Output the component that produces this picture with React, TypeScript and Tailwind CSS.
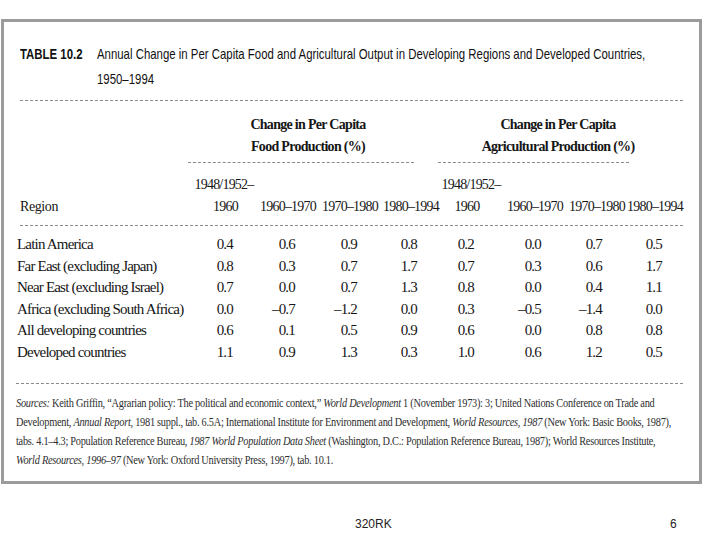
const rows = [
  { region: 'Latin America', values: ['0.4', '0.6', '0.9', '0.8', '0.2', '0.0', '0.7', '0.5'] },
  { region: 'Far East (excluding Japan)', values: ['0.8', '0.3', '0.7', '1.7', '0.7', '0.3', '0.6', '1.7'] },
  { region: 'Near East (excluding Israel)', values: ['0.7', '0.0', '0.7', '1.3', '0.8', '0.0', '0.4', '1.1'] },
  { region: 'Africa (excluding South Africa)', values: ['0.0', '–0.7', '–1.2', '0.0', '0.3', '–0.5', '–1.4', '0.0'] },
  { region: 'All developing countries', values: ['0.6', '0.1', '0.5', '0.9', '0.6', '0.0', '0.8', '0.8'] },
  { region: 'Developed countries', values: ['1.1', '0.9', '1.3', '0.3', '1.0', '0.6', '1.2', '0.5'] },
]

// right padding per value column so the decimals line up like the scan
const valuePad = ['pr-[25px]', 'pr-[23px]', 'pr-[25px]', 'pr-[23px]', 'pr-[28px]', 'pr-[27px]', 'pr-[24px]', 'pr-[22px]']

const cols = 'grid grid-cols-[173px_68px_60px_64px_58px_62px_66px_58px_58px]'
const serif = "font-['Liberation_Serif',serif] text-[#161616]"
const period = 'flex items-end justify-center whitespace-nowrap'

function Rule({ className = '' }: { className?: string }) {
  return <div className={`h-0 border-t border-dashed border-[#8a8a8a] ${className}`} />
}

export default function App() {
  return (
    <div className="w-[720px] h-[540px] bg-white overflow-hidden">
      <div className="ml-px mt-[19px] w-[701px] h-[465px] border-[3px] border-[#9b9b9b] bg-white">
        {/* Title, condensed sans */}
        <div className="flex pl-[16px] pt-[19px] font-['Liberation_Sans',sans-serif] text-[15px] leading-[25px] text-[#111]">
          <div className="w-[77px] shrink-0">
            <span className="inline-block whitespace-nowrap origin-left scale-x-[0.76] font-bold">TABLE 10.2</span>
          </div>
          <div>
            <div className="whitespace-nowrap origin-left scale-x-[0.76]">
              Annual Change in Per Capita Food and Agricultural Output in Developing Regions and Developed Countries,
            </div>
            <div className="whitespace-nowrap origin-left scale-x-[0.76]">1950–1994</div>
          </div>
        </div>

        <Rule className="ml-[16px] w-[663px] mt-[9px]" />

        {/* Group headers */}
        <div className={`${cols} ml-[13px] mt-[13px] ${serif}`}>
          <div />
          <div className="col-span-4 text-center pr-[14px] font-bold text-[14px] leading-[22px] tracking-[-0.7px]">
            <div>Change in Per Capita</div>
            <div>Food Production (%)</div>
            <Rule className="mt-[4px] -ml-[2px] mr-[12px]" />
          </div>
          <div className="col-span-4 text-center pr-[8px] font-bold text-[14px] leading-[22px] tracking-[-0.7px]">
            <div>Change in Per Capita</div>
            <div>Agricultural Production (%)</div>
            <Rule className="mt-[4px] -ml-[2px] mr-[47px]" />
          </div>
        </div>

        {/* Column headers */}
        <div className={`${cols} ml-[13px] mt-[11px] text-[14px] leading-[22px] tracking-[-0.8px] ${serif}`}>
          <div className="flex flex-col justify-end pl-[3px] tracking-[-0.4px]">Region</div>
          <div className="text-center whitespace-nowrap">
            <div>1948/1952–</div>
            <div className="pl-[3px]">1960</div>
          </div>
          <div className={period}>1960–1970</div>
          <div className={period}>1970–1980</div>
          <div className={period}>1980–1994</div>
          <div className="text-center whitespace-nowrap">
            <div>1948/1952–</div>
            <div className="pr-[8px]">1960</div>
          </div>
          <div className={period}>1960–1970</div>
          <div className={period}>1970–1980</div>
          <div className={period}>1980–1994</div>
        </div>

        <Rule className="ml-[16px] w-[663px] mt-[7px]" />

        {/* Data */}
        <div className={`ml-[13px] mt-[8px] text-[15px] leading-[21.6px] tracking-[-0.8px] ${serif}`}>
          {rows.map((row) => (
            <div key={row.region} className={cols}>
              <div className="whitespace-nowrap">{row.region}</div>
              {row.values.map((v, i) => (
                <div key={i} className={`flex justify-end whitespace-nowrap ${valuePad[i]}`}>
                  {v}
                </div>
              ))}
            </div>
          ))}
        </div>

        <Rule className="ml-[12px] w-[667px] mt-[19px]" />

        {/* Sources */}
        <div className="ml-[12px] mt-[10px] font-['Liberation_Serif',serif] text-[12px] leading-[19px] tracking-[-0.3px] text-[#2e2e2e] whitespace-nowrap">
          <div className="origin-left scale-x-[0.86]">
            <i>Sources:</i> Keith Griffin, “Agrarian policy: The political and economic context,” <i>World Development</i> 1 (November 1973): 3; United Nations Conference on Trade and
          </div>
          <div className="origin-left scale-x-[0.86]">
            Development, <i>Annual Report,</i> 1981 suppl., tab. 6.5A; International Institute for Environment and Development, <i>World Resources, 1987</i> (New York: Basic Books, 1987),
          </div>
          <div className="origin-left scale-x-[0.86]">
            tabs. 4.1–4.3; Population Reference Bureau, <i>1987 World Population Data Sheet</i> (Washington, D.C.: Population Reference Bureau, 1987); World Resources Institute,
          </div>
          <div className="origin-left scale-x-[0.86]">
            <i>World Resources, 1996–97</i> (New York: Oxford University Press, 1997), tab. 10.1.
          </div>
        </div>
      </div>

      {/* Slide footer */}
      <div className="flex mt-[32px] pl-[355px] font-['Liberation_Sans',sans-serif] text-[12px] leading-[16px] text-[#222]">
        <div className="w-[315px]">320RK</div>
        <div>6</div>
      </div>
    </div>
  )
}
